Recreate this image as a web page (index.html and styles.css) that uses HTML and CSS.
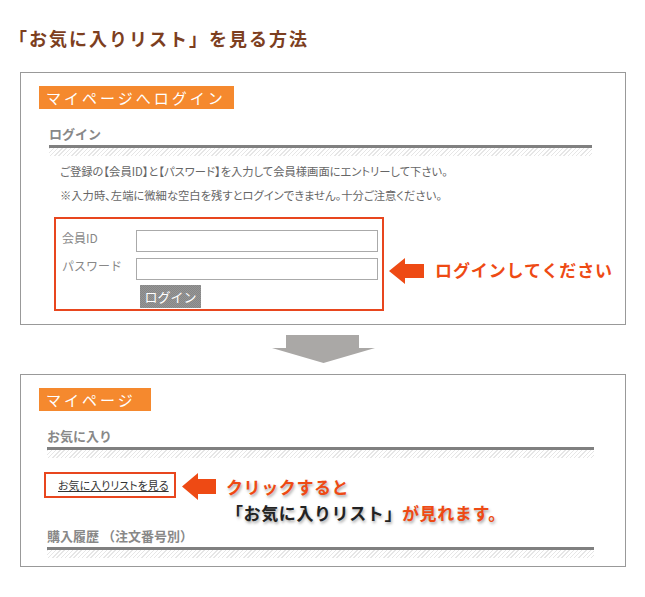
FILE: index.html
```html
<!DOCTYPE html>
<html lang="ja">
<head>
<meta charset="utf-8">
<title>「お気に入りリスト」を見る方法</title>
<link rel="stylesheet" href="styles.css">
</head>
<body>
<div class="page">
  <h1 class="title">「お気に入りリスト」を見る方法</h1>

  <div class="panel">
    <div class="tag">マイページへログイン</div>
    <div class="section">
      <h2 class="sec-head">ログイン</h2>
      <div class="rule"></div>
      <p class="note">ご登録の【会員ID】と【パスワード】を入力して会員様画面にエントリーして下さい。<br>※入力時、左端に微細な空白を残すとログインできません。十分ご注意ください。</p>
    </div>
    <div class="login-row">
      <div class="login-box">
        <div class="field"><span class="field-label">会員ID</span><input class="input" type="text"></div>
        <div class="field field-last"><span class="field-label">パスワード</span><input class="input" type="password"></div>
        <div class="btn">ログイン</div>
      </div>
      <svg class="arrow-left" width="35" height="26" viewBox="0 0 35 26"><polygon points="0,13 16,0 16,6 35,6 35,20 16,20 16,26" fill="#ee4a14"/></svg>
      <span class="callout">ログインしてください</span>
    </div>
  </div>

  <div class="down">
    <svg width="103" height="28" viewBox="0 0 103 28"><polygon points="14,0 87,0 87,13 103,13 51.5,28 0,13 14,13" fill="#aaa8a6"/></svg>
  </div>

  <div class="panel panel-bottom">
    <div class="tag tag-short">マイページ</div>
    <div class="section section-b">
      <h2 class="sec-head">お気に入り</h2>
      <div class="rule"></div>
      <div class="fav-row">
        <a class="fav-link" href="#">お気に入りリストを見る</a>
        <svg class="arrow-left2" width="34" height="27" viewBox="0 0 34 27"><polygon points="0,13.5 16,0 16,6 34,6 34,21 16,21 16,27" fill="#ee4a14"/></svg>
        <div class="callout2">
          <div>クリックすると</div>
          <div><span class="dark">「お気に入りリスト」</span>が見れます。</div>
        </div>
      </div>
      <h2 class="sec-head sec-head-tight">購入履歴 （注文番号別）</h2>
      <div class="rule"></div>
    </div>
  </div>
</div>
</body>
</html>
```

FILE: styles.css
```css
body {
  margin: 0;
  background: #fff;
  font-family: "Noto Sans CJK JP", "Noto Sans", sans-serif;
}

.page {
  width: 645px;
}

.title {
  margin: 0 0 22px 0;
  padding: 26px 0 0 9px;
  font-size: 18px;
  line-height: 24px;
  font-weight: bold;
  color: #7d3f1f;
  letter-spacing: 2px;
}

.panel {
  margin: 0 19px 0 20px;
  border: 1px solid #999;
  padding: 13px 0 13px 18px;
}

.panel-bottom {
  padding-bottom: 8px;
}

.tag {
  width: fit-content;
  height: 23px;
  line-height: 23px;
  padding: 0 8px 0 7px;
  background: #f5892e;
  color: #fff;
  font-size: 15px;
  letter-spacing: 3px;
}

.tag-short {
  padding-right: 15px;
}

.section {
  margin: 0 33px 0 10px;
}

.section-b {
  margin: 0 31px 0 8px;
}

.sec-head {
  margin: 16px 0 0 0;
  padding-bottom: 2px;
  font-size: 13px;
  line-height: 18px;
  font-weight: bold;
  color: #888;
}

.sec-head-tight {
  margin-top: 1px;
}

.rule {
  height: 8px;
  border-top: 3px solid #808080;
  background: repeating-linear-gradient(135deg, #e6e6e6 0 1px, #fff 1px 3px);
}

.note {
  margin: 3px 0 0 11px;
  font-size: 11.3px;
  line-height: 24px;
  color: #666;
  font-feature-settings: "palt";
  white-space: nowrap;
}

.login-row {
  display: flex;
  align-items: flex-start;
  margin: 10px 0 0 15px;
}

.login-box {
  width: 316px;
  border: 2px solid #e8461e;
  padding: 11px 4px 1px 6px;
}

.field {
  display: flex;
  align-items: flex-start;
  margin-bottom: 6px;
}

.field-last {
  margin-bottom: 5px;
}

.field-label {
  width: 74px;
  font-size: 12px;
  line-height: 16px;
  color: #888;
}

.input {
  box-sizing: border-box;
  width: 242px;
  height: 22px;
  margin: 0;
  padding: 0;
  border: 1px solid #aaa;
  background: #fff;
}

.btn {
  margin-left: 78px;
  width: 61px;
  height: 23px;
  line-height: 23px;
  text-align: center;
  font-size: 13px;
  color: #fff;
  background: repeating-conic-gradient(#868686 0 25%, #969696 0 50%) 0 0 / 2px 2px;
}

.arrow-left {
  margin: 41px 0 0 5px;
  flex: none;
}

.callout {
  margin: 41px 0 0 11px;
  font-size: 17px;
  line-height: 24px;
  font-weight: bold;
  color: #ee4a14;
  letter-spacing: 0.9px;
}

.down {
  display: flex;
  justify-content: center;
  margin: 10px 19px 11px 20px;
}

.down svg {
  display: block;
}

.fav-row {
  display: flex;
  align-items: flex-start;
  margin: 14px 0 0 -3px;
}

.fav-link {
  box-sizing: border-box;
  flex: none;
  width: 132px;
  height: 26px;
  border: 2px solid #e8461e;
  padding-left: 12px;
  font-size: 11px;
  line-height: 22px;
  color: #333;
  text-decoration: underline;
  font-feature-settings: "palt";
  white-space: nowrap;
}

.arrow-left2 {
  margin: 1px 0 0 6px;
  flex: none;
}

.callout2 {
  margin: 2px 0 0 10px;
  font-size: 17px;
  line-height: 26px;
  font-weight: bold;
  color: #ee4a14;
  letter-spacing: 0.6px;
  text-shadow: 1px 2px 3px rgba(0, 0, 0, 0.35);
}

.dark {
  color: #222;
}
```
